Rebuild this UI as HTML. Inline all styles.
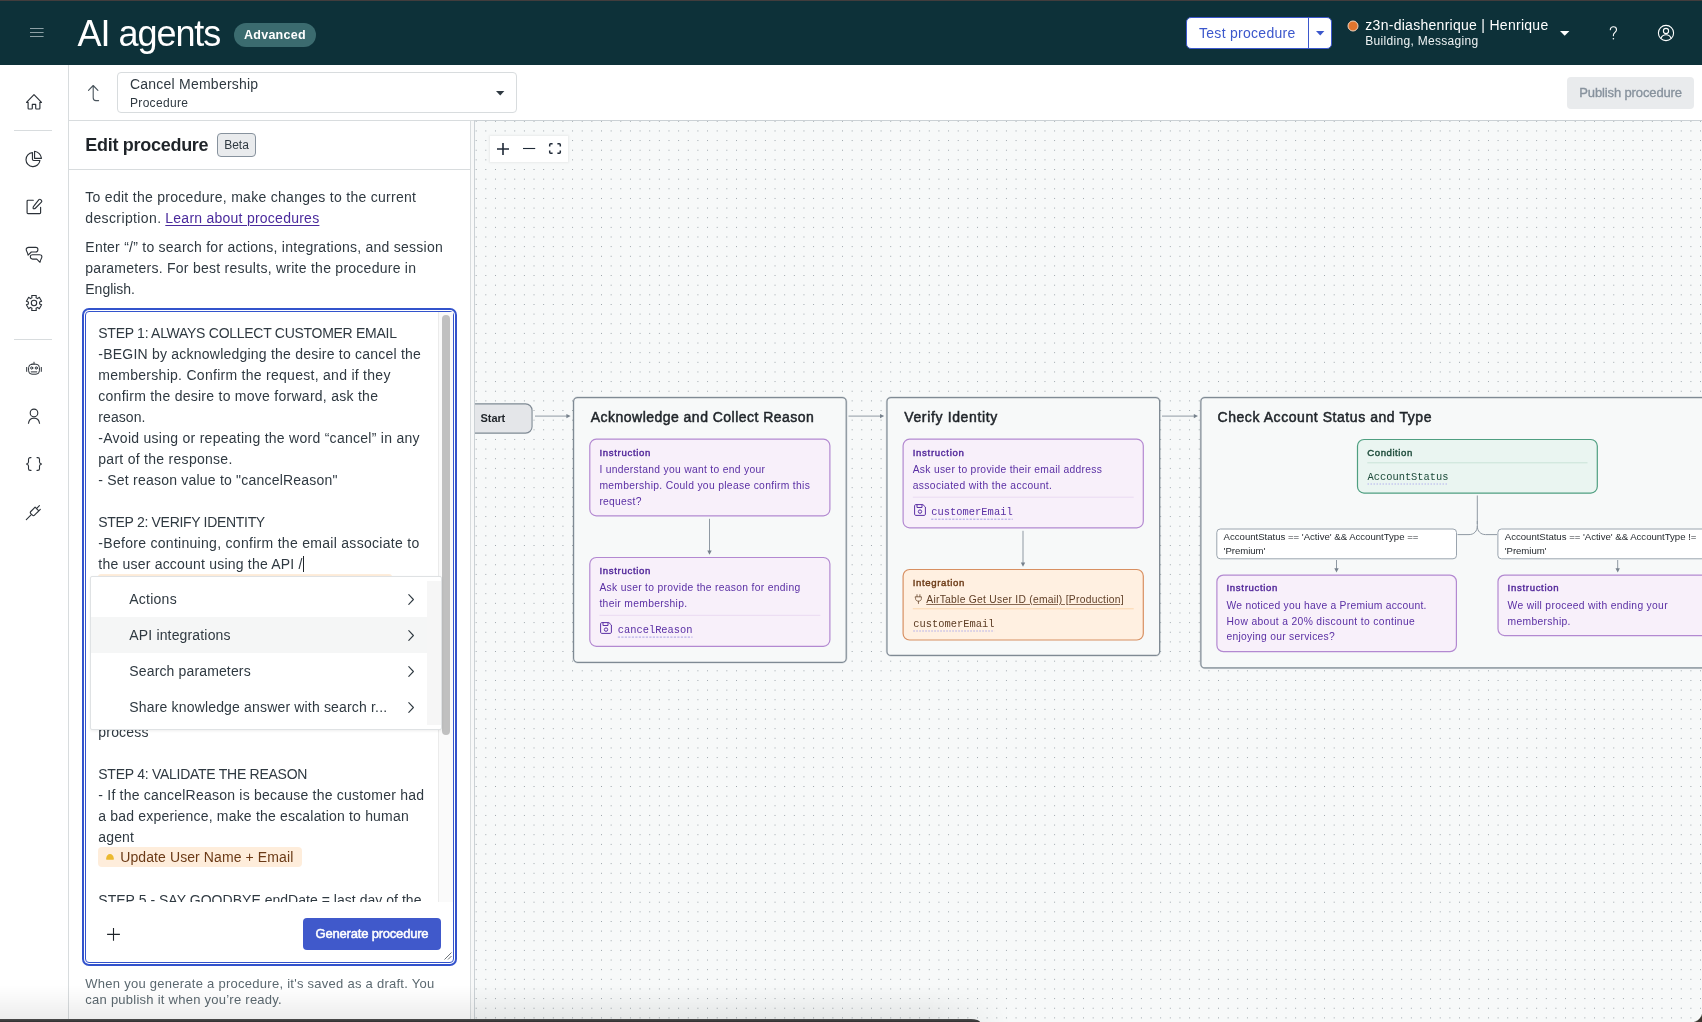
<!DOCTYPE html>
<html><head><meta charset="utf-8"><title>AI agents</title>
<style>
*{box-sizing:border-box;margin:0;padding:0}
html{will-change:transform}
html,body{width:1702px;height:1022px;overflow:hidden;background:#fff;font-family:"Liberation Sans",sans-serif;color:#2f3941}
.abs{position:absolute}
.t{position:absolute;white-space:pre;line-height:1}
svg{position:absolute;overflow:visible}
#hdr{position:absolute;left:0;top:0;width:1702px;height:65px;background:#0d3139}
#side{position:absolute;left:0;top:65px;width:69px;height:957px;background:#fff;border-right:1px solid #d8dcde}
#sub{position:absolute;left:69px;top:65px;width:1633px;height:56px;background:#fff;border-bottom:1px solid #d8dcde}
#panel{position:absolute;left:69px;top:121px;width:402px;height:901px;background:#fff;border-right:1px solid #d8dcde}
#gap{position:absolute;left:471px;top:121px;width:3px;height:901px;background:#f8f9f9}
#canvas{position:absolute;left:474px;top:120px;width:1228px;height:902px;border-left:1px solid #cbd1d5;border-top:1px solid #cbd1d5;background-color:#f7f9f9;background-image:radial-gradient(circle at 0.5px 0.5px,#9aa3a9 0.55px,rgba(154,163,169,0) 0.95px);background-size:9.647px 9.653px;background-position:.7px -.2px}
#clip{position:absolute;left:475px;top:121px;width:1227px;height:901px;overflow:hidden}
#clip>.in{position:absolute;left:-475px;top:-121px;width:1702px;height:1022px}
</style></head><body>
<div id="hdr"></div>
<div id="side"></div>
<div id="sub"></div>
<div id="panel"></div>
<div id="gap"></div>
<div id="canvas"></div>
<div class="abs" style="left:0px;top:0px;width:1702px;height:1px;background:#423d3d"></div><svg style="left:30px;top:28px;" width="14" height="10" viewBox="0 0 14 10" fill="none"><path d="M0 .5h13.6M0 4.5h13.6M0 8.5h13.6" stroke="#8da0a5" stroke-width="1"/></svg><span class="t" style="left:77.50px;top:16.09px;font-size:36px;font-family:'Liberation Sans',sans-serif;color:#ffffff;letter-spacing:-1.034px;">AI agents</span><div class="abs" style="left:234px;top:23px;width:82px;height:24px;background:#3b6b6f;border-radius:12px"></div><span class="t" style="left:244.00px;top:28.77px;font-size:12.5px;font-family:'Liberation Sans',sans-serif;font-weight:700;color:#ffffff;letter-spacing:0.256px;">Advanced</span><div class="abs" style="left:1186px;top:17px;width:146px;height:32px;background:#fff;border:1px solid #3b57cc;border-radius:5px"></div><div class="abs" style="left:1308px;top:17px;width:1px;height:32px;background:#3b57cc"></div><span class="t" style="left:1199.00px;top:25.91px;font-size:14px;font-family:'Liberation Sans',sans-serif;color:#3b57cc;letter-spacing:0.285px;">Test procedure</span><svg style="left:1315.5px;top:30.5px;" width="9" height="5" viewBox="0 0 9 5" fill="none"><path d="M0 0h8.4L4.2 4.4z" fill="#3b57cc"/></svg><svg style="left:1347px;top:20px;" width="12" height="12" viewBox="0 0 12 12" fill="none"><circle cx="6" cy="6" r="5" fill="#e1752e" stroke="#f4d4bd" stroke-width="1"/></svg><span class="t" style="left:1365.30px;top:18.11px;font-size:14px;font-family:'Liberation Sans',sans-serif;color:#ffffff;letter-spacing:0.280px;">z3n-diashenrique | Henrique</span><span class="t" style="left:1365.30px;top:35.00px;font-size:12px;font-family:'Liberation Sans',sans-serif;color:#eef3f4;letter-spacing:0.305px;">Building, Messaging</span><svg style="left:1560px;top:30.5px;" width="10" height="5" viewBox="0 0 10 5" fill="none"><path d="M0 0h9.4L4.7 4.8z" fill="#fff"/></svg><svg style="left:1609px;top:26px;" width="9" height="14" viewBox="0 0 9 14" fill="none"><path d="M1.300 3.700C1.300 1.900 2.600 .8 4.400 .8S7.500 2 7.500 3.700C7.500 6.200 4.400 6.400 4.400 9.100V9.800" stroke="#fff" stroke-width="1.100" stroke-linecap="round"/><circle cx="4.400" cy="12.700" r=".8" fill="#fff"/></svg><svg style="left:1657px;top:24px;" width="18" height="18" viewBox="0 0 18 18" fill="none"><circle cx="9" cy="9" r="7.6" stroke="#fff" stroke-width="1.1"/><circle cx="9" cy="7" r="2.6" stroke="#fff" stroke-width="1.1"/><path d="M4 14.2c.9-2.4 2.8-3.4 5-3.4s4.1 1 5 3.4" stroke="#fff" stroke-width="1.1"/></svg>
<svg style="left:26px;top:94px;" width="16" height="16" viewBox="0 0 16 16" fill="none"><g stroke="#2b3138" stroke-width="1.15" stroke-linecap="round" stroke-linejoin="round"><path d="M.5 8.300 8 .7l7.500 7.600h-1.600v6c0 .4-.3.700-.7.700H10.400c-.4 0-.7-.3-.7-.7v-3.900H6.300v3.900c0 .4-.3.700-.7.700H2.800c-.4 0-.7-.3-.7-.7v-6z"/></g></svg><div class="abs" style="left:14px;top:130px;width:38px;height:1px;background:#d8dcde"></div><svg style="left:26px;top:151px;" width="16" height="16" viewBox="0 0 16 16" fill="none"><g stroke="#2b3138" stroke-width="1.15" stroke-linecap="round" stroke-linejoin="round"><path d="M6.450 1.620A7 7 0 1 0 13.940 9.500H7.650Q6.450 9.500 6.450 8.300z"/><path d="M8.560 .3A8.600 8.600 0 0 1 15.500 7.300H8.560z"/></g></svg><svg style="left:26px;top:199px;" width="16" height="16" viewBox="0 0 16 16" fill="none"><g stroke="#2b3138" stroke-width="1.15" stroke-linecap="round" stroke-linejoin="round"><path d="M14.600 8.200v5.500c0 .5-.4.900-.9.900H2c-.5 0-.9-.4-.9-.9V2.100c0-.5.400-.9.900-.9h5.300"/><path d="M12.900.7c.5-.5 1.300-.5 1.800 0l.7.700c.5.5.5 1.300 0 1.800L9.600 9c-.5.500-1.700.800-2.400.6-.2-.7.100-1.900.600-2.400z"/></g></svg><svg style="left:26px;top:247px;" width="16" height="16" viewBox="0 0 16 16" fill="none"><g stroke="#2b3138" stroke-width="1.1" stroke-linecap="round" stroke-linejoin="round"><path d="M2.600.4h7.200c1.200 0 2.100.9 2.100 2 0 1.400-.9 2.600-2.300 2.600H5.300L2.100 8.200c-.2-1-.500-2-.9-2.900C.700 4.300.2 3.300.2 2.400.2 1.300 1.300.4 2.600.4z"/><path d="M6.600 7.700h7c1.300 0 2.300.9 2.300 2 0 .9-.5 1.800-1 2.700-.4.900-.7 1.900-.9 2.900l-3.200-3.200H6.600c-1.400 0-2.300-1.200-2.300-2.500 0-1 .9-1.900 2.300-1.900z"/></g></svg><svg style="left:26px;top:295px;" width="16" height="16" viewBox="0 0 16 16" fill="none"><g stroke="#2b3138" stroke-width="1.1" stroke-linecap="round" stroke-linejoin="round"><circle cx="8" cy="8" r="2.700"/><path d="M5.72 0.54L10.28 0.54L10.04 2.68L11.59 3.57L13.32 2.30L15.60 6.25L13.63 7.11L13.63 8.89L15.60 9.75L13.32 13.70L11.59 12.43L10.04 13.32L10.28 15.46L5.72 15.46L5.96 13.32L4.41 12.43L2.68 13.70L0.40 9.75L2.37 8.89L2.37 7.11L0.40 6.25L2.68 2.30L4.41 3.57L5.96 2.68z"/></g></svg><div class="abs" style="left:14px;top:339px;width:38px;height:1px;background:#d8dcde"></div><svg style="left:26px;top:361px;" width="16" height="16" viewBox="0 0 16 16" fill="none"><g stroke="#2b3138" stroke-width="1" stroke-linecap="round" stroke-linejoin="round"><rect x="2.600" y="3.200" width="10.800" height="10" rx="3.400"/><path d="M8 3V1.200M.7 6.400v4M15.300 6.400v4M5.200 10.900h5.600"/><circle cx="5.700" cy="7" r="1.100"/><circle cx="10.300" cy="7" r="1.100"/></g></svg><svg style="left:26px;top:408px;" width="16" height="16" viewBox="0 0 16 16" fill="none"><g stroke="#2b3138" stroke-width="1.1" stroke-linecap="round" stroke-linejoin="round"><circle cx="8" cy="4.900" r="3.800"/><path d="M2.400 15.800c.4-3.600 2.700-5.700 5.600-5.700s5.200 2.100 5.600 5.700" stroke-linecap="butt"/></g></svg><svg style="left:26px;top:456px;" width="16" height="16" viewBox="0 0 16 16" fill="none"><g stroke="#2b3138" stroke-width="1.1" stroke-linecap="round" stroke-linejoin="round"><path d="M5 1.600H4.200c-.9 0-1.700.7-1.700 1.700v2.600c0 .9-.8 1.700-2 2.100 1.200.4 2 1.200 2 2.100v2.600c0 1 .8 1.700 1.700 1.700H5M11 1.600h.8c.9 0 1.700.7 1.700 1.700v2.600c0 .9.800 1.700 2 2.100-1.200.4-2 1.200-2 2.100v2.600c0 1-.8 1.700-1.700 1.700H11"/></g></svg><svg style="left:26px;top:504px;" width="16" height="16" viewBox="0 0 16 16" fill="none"><g stroke="#2b3138" stroke-width="1.1" stroke-linecap="round" stroke-linejoin="round"><path d="M.3 15.600l4.500-4.500M9.100 3.200L4.800 7.500c-.6.600-.6 1.500 0 2.100l1.600 1.600c.6.600 1.500.6 2.100 0l4.300-4.300zM10.500 4.600l2.900-2.900M11.400 8.300l2.900-2.900M14.800.5"/></g></svg>
<svg style="left:87px;top:84px;" width="13" height="18" viewBox="0 0 13 18" fill="none"><path d="M6.200 1.600v12.200c0 1.600 1.100 2.800 2.700 2.800h2.700M1.500 6.300l4.700-4.800 4.700 4.800" stroke="#49545c" stroke-width="1.100" stroke-linecap="round" stroke-linejoin="round"/></svg><div class="abs" style="left:117px;top:72px;width:400px;height:41px;background:#fff;border:1px solid #d8dcde;border-radius:4px"></div><span class="t" style="left:130.00px;top:76.81px;font-size:14px;font-family:'Liberation Sans',sans-serif;color:#2f3941;letter-spacing:0.229px;">Cancel Membership</span><span class="t" style="left:130.00px;top:97.20px;font-size:12px;font-family:'Liberation Sans',sans-serif;color:#2f3941;letter-spacing:0.314px;">Procedure</span><svg style="left:495.5px;top:90.5px;" width="9" height="5" viewBox="0 0 9 5" fill="none"><path d="M0 0h8.400L4.200 4.400z" fill="#2f3941"/></svg><div class="abs" style="left:1567px;top:77px;width:127px;height:32px;background:#e9ebed;border-radius:4px"></div><span class="t" style="left:1579.30px;top:86.35px;font-size:13px;font-family:'Liberation Sans',sans-serif;color:#87929d;-webkit-text-stroke:.35px #87929d;letter-spacing:-0.129px;">Publish procedure</span>
<span class="t" style="left:85.30px;top:136.34px;font-size:18px;font-family:'Liberation Sans',sans-serif;font-weight:700;color:#1f2429;letter-spacing:-0.288px;">Edit procedure</span><div class="abs" style="left:217px;top:133px;width:39px;height:24px;background:#e9ebed;border:1px solid #87929d;border-radius:4px"></div><span class="t" style="left:224.20px;top:139.20px;font-size:12px;font-family:'Liberation Sans',sans-serif;color:#2f3941;letter-spacing:0.003px;">Beta</span><div class="abs" style="left:69px;top:169px;width:401px;height:1px;background:#d8dcde"></div><span class="t" style="left:85.30px;top:190.01px;font-size:14px;font-family:'Liberation Sans',sans-serif;color:#2f3941;letter-spacing:0.285px;">To edit the procedure, make changes to the current</span><span class="t" style="left:85.30px;top:211.21px;font-size:14px;font-family:'Liberation Sans',sans-serif;color:#2f3941;letter-spacing:0.376px;">description.</span><span class="t" style="left:165.30px;top:211.21px;font-size:14px;font-family:'Liberation Sans',sans-serif;color:#4a2a9c;text-decoration:underline;text-underline-offset:2px;text-decoration-thickness:1px;letter-spacing:0.247px;">Learn about procedures</span><span class="t" style="left:85.30px;top:240.11px;font-size:14px;font-family:'Liberation Sans',sans-serif;color:#2f3941;letter-spacing:0.250px;">Enter “/” to search for actions, integrations, and session</span><span class="t" style="left:85.30px;top:261.21px;font-size:14px;font-family:'Liberation Sans',sans-serif;color:#2f3941;letter-spacing:0.260px;">parameters. For best results, write the procedure in</span><span class="t" style="left:85.30px;top:282.01px;font-size:14px;font-family:'Liberation Sans',sans-serif;color:#2f3941;letter-spacing:-0.014px;">English.</span><div class="abs" style="left:85px;top:311px;width:369px;height:652px;background:#fff;border:1px solid #3353cc;border-radius:4px;box-shadow:0 0 0 1px #fff,0 0 0 3px #3353cc"></div><div class="abs" style="left:438px;top:312px;width:15px;height:590px;background:#fafafa;border-left:1px solid #ebebeb"></div><div class="abs" style="left:442px;top:315px;width:8px;height:420px;background:#c0c0c0;border-radius:4px"></div><div class="abs" style="left:86px;top:312px;width:352px;height:590px;overflow:hidden"><div class="abs" style="left:-86px;top:-312px;width:1702px;height:1022px"><span class="t" style="left:98.30px;top:326.01px;font-size:14px;font-family:'Liberation Sans',sans-serif;color:#2f3941;letter-spacing:-0.276px;">STEP 1: ALWAYS COLLECT CUSTOMER EMAIL</span><span class="t" style="left:98.30px;top:347.01px;font-size:14px;font-family:'Liberation Sans',sans-serif;color:#2f3941;letter-spacing:0.224px;">-BEGIN by acknowledging the desire to cancel the</span><span class="t" style="left:98.30px;top:368.01px;font-size:14px;font-family:'Liberation Sans',sans-serif;color:#2f3941;letter-spacing:0.279px;">membership. Confirm the request, and if they</span><span class="t" style="left:98.30px;top:389.01px;font-size:14px;font-family:'Liberation Sans',sans-serif;color:#2f3941;letter-spacing:0.266px;">confirm the desire to move forward, ask the</span><span class="t" style="left:98.30px;top:410.01px;font-size:14px;font-family:'Liberation Sans',sans-serif;color:#2f3941;letter-spacing:0.085px;">reason.</span><span class="t" style="left:98.30px;top:431.01px;font-size:14px;font-family:'Liberation Sans',sans-serif;color:#2f3941;letter-spacing:0.272px;">-Avoid using or repeating the word “cancel” in any</span><span class="t" style="left:98.30px;top:452.01px;font-size:14px;font-family:'Liberation Sans',sans-serif;color:#2f3941;letter-spacing:0.280px;">part of the response.</span><span class="t" style="left:98.30px;top:473.01px;font-size:14px;font-family:'Liberation Sans',sans-serif;color:#2f3941;letter-spacing:0.215px;">- Set reason value to &quot;cancelReason&quot;</span><span class="t" style="left:98.30px;top:515.01px;font-size:14px;font-family:'Liberation Sans',sans-serif;color:#2f3941;letter-spacing:-0.311px;">STEP 2: VERIFY IDENTITY</span><span class="t" style="left:98.30px;top:536.01px;font-size:14px;font-family:'Liberation Sans',sans-serif;color:#2f3941;letter-spacing:0.292px;">-Before continuing, confirm the email associate to</span><span class="t" style="left:98.30px;top:557.01px;font-size:14px;font-family:'Liberation Sans',sans-serif;color:#2f3941;letter-spacing:0.207px;">the user account using the API /</span><span class="t" style="left:98.30px;top:725.01px;font-size:14px;font-family:'Liberation Sans',sans-serif;color:#2f3941;letter-spacing:0.196px;">process</span><span class="t" style="left:98.30px;top:767.01px;font-size:14px;font-family:'Liberation Sans',sans-serif;color:#2f3941;letter-spacing:-0.268px;">STEP 4: VALIDATE THE REASON</span><span class="t" style="left:98.30px;top:788.01px;font-size:14px;font-family:'Liberation Sans',sans-serif;color:#2f3941;letter-spacing:0.219px;">- If the cancelReason is because the customer had</span><span class="t" style="left:98.30px;top:809.01px;font-size:14px;font-family:'Liberation Sans',sans-serif;color:#2f3941;letter-spacing:0.187px;">a bad experience, make the escalation to human</span><span class="t" style="left:98.30px;top:830.01px;font-size:14px;font-family:'Liberation Sans',sans-serif;color:#2f3941;letter-spacing:0.131px;">agent</span><span class="t" style="left:98.30px;top:893.01px;font-size:14px;font-family:'Liberation Sans',sans-serif;color:#2f3941;letter-spacing:0.031px;">STEP 5 - SAY GOODBYE endDate = last day of the</span><div class="abs" style="left:303px;top:556px;width:1px;height:16px;background:#1f2429"></div><div class="abs" style="left:98px;top:574px;width:294px;height:6px;background:#feeddb;border-radius:3px 3px 0 0"></div><div class="abs" style="left:98px;top:847px;width:204px;height:20px;background:#feeddb;border-radius:4px"></div><svg style="left:106px;top:853px;" width="8" height="8" viewBox="0 0 8 8" fill="none"><path d="M.6 6.700C.1 6.700.1 6 .2 5.300.5 2.700 2 .9 4 .9s3.500 1.800 3.800 4.400c.1.700.1 1.400-.4 1.400z" fill="#ebb92e"/></svg><span class="t" style="left:120.20px;top:850.01px;font-size:14px;font-family:'Liberation Sans',sans-serif;color:#6b3a16;letter-spacing:0.100px;">Update User Name + Email</span></div></div><div class="abs" style="left:89.5px;top:576px;width:352.5px;height:153.5px;background:#fff;border:1px solid #dfe2e4;border-radius:2px;box-shadow:0 1px 3px rgba(0,0,0,.07)"></div><div class="abs" style="left:91px;top:617px;width:336px;height:36px;background:#f5f6f6"></div><div class="abs" style="left:427px;top:581px;width:14px;height:144px;background:#f6f6f6"></div><span class="t" style="left:129.30px;top:592.01px;font-size:14px;font-family:'Liberation Sans',sans-serif;color:#2f3941;letter-spacing:0.240px;">Actions</span><svg style="left:408px;top:593.5px;" width="6" height="11" viewBox="0 0 6 11" fill="none"><path d="M.8 .6l4.600 4.900L.8 10.400" stroke="#2f3941" stroke-width="1.100" stroke-linecap="round" stroke-linejoin="round"/></svg><span class="t" style="left:129.30px;top:628.01px;font-size:14px;font-family:'Liberation Sans',sans-serif;color:#2f3941;letter-spacing:0.160px;">API integrations</span><svg style="left:408px;top:629.5px;" width="6" height="11" viewBox="0 0 6 11" fill="none"><path d="M.8 .6l4.600 4.900L.8 10.400" stroke="#2f3941" stroke-width="1.100" stroke-linecap="round" stroke-linejoin="round"/></svg><span class="t" style="left:129.30px;top:664.01px;font-size:14px;font-family:'Liberation Sans',sans-serif;color:#2f3941;letter-spacing:0.143px;">Search parameters</span><svg style="left:408px;top:665.5px;" width="6" height="11" viewBox="0 0 6 11" fill="none"><path d="M.8 .6l4.600 4.900L.8 10.400" stroke="#2f3941" stroke-width="1.100" stroke-linecap="round" stroke-linejoin="round"/></svg><span class="t" style="left:129.30px;top:700.01px;font-size:14px;font-family:'Liberation Sans',sans-serif;color:#2f3941;letter-spacing:0.170px;">Share knowledge answer with search r...</span><svg style="left:408px;top:701.5px;" width="6" height="11" viewBox="0 0 6 11" fill="none"><path d="M.8 .6l4.600 4.900L.8 10.400" stroke="#2f3941" stroke-width="1.100" stroke-linecap="round" stroke-linejoin="round"/></svg><svg style="left:107px;top:928px;" width="13" height="13" viewBox="0 0 13 13" fill="none"><path d="M6.500 0v12.800M.1 6.400h12.800" stroke="#1f2429" stroke-width="1.100"/></svg><div class="abs" style="left:303px;top:918px;width:138px;height:32px;background:#4059cb;border-radius:4px"></div><span class="t" style="left:315.60px;top:927.35px;font-size:13px;font-family:'Liberation Sans',sans-serif;color:#fff;-webkit-text-stroke:.5px #fff;letter-spacing:-0.198px;">Generate procedure</span><svg style="left:444px;top:952px;" width="8" height="8" viewBox="0 0 8 8" fill="none"><path d="M7.500 .5l-7 7M7.500 4l-3.500 3.500" stroke="#6b7278" stroke-width="1"/></svg><span class="t" style="left:85.30px;top:976.95px;font-size:13px;font-family:'Liberation Sans',sans-serif;color:#5c6970;letter-spacing:0.263px;">When you generate a procedure, it&#x27;s saved as a draft. You</span><span class="t" style="left:85.30px;top:992.95px;font-size:13px;font-family:'Liberation Sans',sans-serif;color:#5c6970;letter-spacing:0.252px;">can publish it when you’re ready.</span>
<div id="clip"><div class="in">
<svg style="left:0;top:0" width="1702" height="1022" viewBox="0 0 1702 1022" fill="none"><rect x="440.55" y="403.85" width="91.50" height="29.30" rx="6.5" fill="#e4e6e9" stroke="#7f8a94" stroke-width="1.1"/><path d="M535 416.1H568.6" stroke="#8f99a3" stroke-width="1"/><path d="M566.4 413.90000000000003v4.400L570.6 416.1z" fill="#77828d"/><rect x="572.90" y="396.90" width="274.00" height="266.10" rx="4.5" fill="none" stroke="rgba(127,138,148,.28)" stroke-width="1"/><rect x="573.60" y="397.60" width="272.60" height="264.70" rx="4" fill="#f7f9f9" stroke="#7f8a94" stroke-width="1.2"/><rect x="589.80" y="439.20" width="240.10" height="76.60" rx="6.5" fill="#f8f0fa" stroke="#b389d1" stroke-width="1.2"/><path d="M709.5 518.8V552.8" stroke="#8f99a3" stroke-width="1"/><path d="M707.3 550.5999999999999h4.400L709.5 554.8z" fill="#77828d"/><rect x="589.80" y="557.50" width="240.10" height="88.80" rx="6.5" fill="#f8f0fa" stroke="#b389d1" stroke-width="1.2"/><path d="M599.4 615.3H820.3" stroke="#eadaf2" stroke-width="1"/><path d="M617.8 637.1H692.5" stroke="#a9a0e4" stroke-width="1" stroke-dasharray="2.200 1.300"/><path d="M848.5 416.1H882.2" stroke="#8f99a3" stroke-width="1"/><path d="M880.0 413.90000000000003v4.400L884.2 416.1z" fill="#77828d"/><rect x="886.30" y="396.90" width="274.00" height="259.20" rx="4.5" fill="none" stroke="rgba(127,138,148,.28)" stroke-width="1"/><rect x="887.00" y="397.60" width="272.60" height="257.80" rx="4" fill="#f7f9f9" stroke="#7f8a94" stroke-width="1.2"/><rect x="903.10" y="439.20" width="240.20" height="88.60" rx="6.5" fill="#f8f0fa" stroke="#b389d1" stroke-width="1.2"/><path d="M912.8 497.2H1133.7" stroke="#eadaf2" stroke-width="1"/><path d="M931.2 519.2H1012.7" stroke="#a9a0e4" stroke-width="1" stroke-dasharray="2.200 1.300"/><path d="M1023 530.8V564.8" stroke="#8f99a3" stroke-width="1"/><path d="M1020.8 562.5999999999999h4.400L1023 566.8z" fill="#77828d"/><rect x="903.10" y="569.50" width="240.20" height="70.50" rx="6.5" fill="#fff0e1" stroke="#d89062" stroke-width="1.2"/><path d="M912.8 608.8H1133.7" stroke="#fbd6ad" stroke-width="1"/><path d="M913.3 631.0H994.4" stroke="#a9a7ea" stroke-width="1" stroke-dasharray="1.500 1.500"/><path d="M1162 416.1H1196" stroke="#8f99a3" stroke-width="1"/><path d="M1193.8 413.90000000000003v4.400L1198 416.1z" fill="#77828d"/><rect x="1200.20" y="396.90" width="559.90" height="271.70" rx="4.5" fill="none" stroke="rgba(127,138,148,.28)" stroke-width="1"/><rect x="1200.90" y="397.60" width="558.50" height="270.30" rx="4" fill="#f7f9f9" stroke="#7f8a94" stroke-width="1.2"/><rect x="1357.50" y="439.50" width="239.80" height="53.60" rx="6.5" fill="#eaf5f1" stroke="#4f9f81" stroke-width="1.2"/><path d="M1367.3 462.8H1587.5" stroke="#c9e3d8" stroke-width="1"/><path d="M1367.5 484.0H1448.5" stroke="#b4b2ee" stroke-width="1" stroke-dasharray="1.500 1.500"/><path d="M1477.300 495.500V524" stroke="#8f99a3" stroke-width="1" fill="none"/><path d="M1457.500 534.600H1469c5 0 8.300-3.500 8.300-8.500V521M1497 534.600H1485.600c-5 0-8.300-3.500-8.300-8.500" stroke="#8f99a3" stroke-width="1" fill="none"/><rect x="1216.80" y="529.00" width="239.70" height="29.80" rx="3.5" fill="#fff" stroke="#9aa4ae" stroke-width="1"/><rect x="1497.90" y="529.00" width="261.60" height="29.80" rx="3.5" fill="#fff" stroke="#9aa4ae" stroke-width="1"/><path d="M1336.5 560V570.5" stroke="#8f99a3" stroke-width="1"/><path d="M1334.3 568.3h4.400L1336.5 572.5z" fill="#77828d"/><path d="M1617.7 560V570.5" stroke="#8f99a3" stroke-width="1"/><path d="M1615.5 568.3h4.400L1617.7 572.5z" fill="#77828d"/><rect x="1216.90" y="575.10" width="239.50" height="76.60" rx="6.5" fill="#f8f0fa" stroke="#b389d1" stroke-width="1.2"/><rect x="1498.00" y="575.10" width="261.40" height="60.50" rx="6.5" fill="#f8f0fa" stroke="#b389d1" stroke-width="1.2"/></svg><div class="abs" style="left:490px;top:136px;width:78px;height:26px;background:#fff;box-shadow:0 0 2px 1px rgba(0,0,0,.06)"></div><svg style="left:497px;top:143px;" width="12" height="12" viewBox="0 0 12 12" fill="none"><path d="M6 0v12M0 6h12" stroke="#1f2937" stroke-width="1.600"/></svg><svg style="left:523px;top:147px;" width="12" height="3" viewBox="0 0 12 3" fill="none"><path d="M0 1.500h12.200" stroke="#1f2937" stroke-width="1.100"/></svg><svg style="left:549px;top:143px;" width="12" height="11" viewBox="0 0 12 11" fill="none"><path d="M.7 3.400V1.700c0-.6.400-1 1-1h1.900M8.400.7h1.900c.6 0 1 .4 1 1v1.700M11.300 7.600v1.700c0 .6-.4 1-1 1H8.400M3.600 10.300H1.700c-.6 0-1-.4-1-1V7.600" stroke="#1f2937" stroke-width="1.500"/></svg><span class="t" style="left:480.60px;top:413.24px;font-size:11px;font-family:'Liberation Sans',sans-serif;font-weight:700;color:#1f2429;letter-spacing:-0.093px;">Start</span><span class="t" style="left:590.80px;top:410.21px;font-size:14px;font-family:'Liberation Sans',sans-serif;color:#1f2429;-webkit-text-stroke:.5px #1f2429;letter-spacing:0.471px;">Acknowledge and Collect Reason</span><span class="t" style="left:599.40px;top:448.14px;font-size:9.6px;font-family:'Liberation Sans',sans-serif;color:#52279a;-webkit-text-stroke:.4px #52279a;letter-spacing:0.676px;">Instruction</span><span class="t" style="left:599.40px;top:465.09px;font-size:10.3px;font-family:'Liberation Sans',sans-serif;color:#5a2fa4;letter-spacing:0.309px;">I understand you want to end your</span><span class="t" style="left:599.40px;top:481.09px;font-size:10.3px;font-family:'Liberation Sans',sans-serif;color:#5a2fa4;letter-spacing:0.326px;">membership. Could you please confirm this</span><span class="t" style="left:599.40px;top:496.99px;font-size:10.3px;font-family:'Liberation Sans',sans-serif;color:#5a2fa4;letter-spacing:0.278px;">request?</span><span class="t" style="left:599.40px;top:566.24px;font-size:9.6px;font-family:'Liberation Sans',sans-serif;color:#52279a;-webkit-text-stroke:.4px #52279a;letter-spacing:0.676px;">Instruction</span><span class="t" style="left:599.40px;top:583.09px;font-size:10.3px;font-family:'Liberation Sans',sans-serif;color:#5a2fa4;letter-spacing:0.312px;">Ask user to provide the reason for ending</span><span class="t" style="left:599.40px;top:599.19px;font-size:10.3px;font-family:'Liberation Sans',sans-serif;color:#5a2fa4;letter-spacing:0.335px;">their membership.</span><svg style="left:600px;top:622.2px;" width="12" height="12" viewBox="0 0 12 12" fill="none"><g stroke="#5a2fa4" stroke-width="1" stroke-linejoin="round"><path d="M1.700.6h7.200l2.500 2.400v7.300c0 .6-.5 1.100-1.100 1.100H1.700c-.6 0-1.100-.5-1.100-1.100V1.700C.6 1.100 1.100.6 1.700.6z"/><path d="M3 .8v2.700h5V.8"/><circle cx="6" cy="7.600" r="1.700"/></g></svg><span class="t" style="left:617.80px;top:625.32px;font-size:10.4px;font-family:'Liberation Mono',monospace;color:#5a2fa4;letter-spacing:-0.011px;">cancelReason</span><span class="t" style="left:904.20px;top:410.21px;font-size:14px;font-family:'Liberation Sans',sans-serif;color:#1f2429;-webkit-text-stroke:.5px #1f2429;letter-spacing:0.650px;">Verify Identity</span><span class="t" style="left:912.70px;top:448.14px;font-size:9.6px;font-family:'Liberation Sans',sans-serif;color:#52279a;-webkit-text-stroke:.4px #52279a;letter-spacing:0.694px;">Instruction</span><span class="t" style="left:912.70px;top:465.09px;font-size:10.3px;font-family:'Liberation Sans',sans-serif;color:#5a2fa4;letter-spacing:0.297px;">Ask user to provide their email address</span><span class="t" style="left:912.70px;top:481.09px;font-size:10.3px;font-family:'Liberation Sans',sans-serif;color:#5a2fa4;letter-spacing:0.362px;">associated with the account.</span><svg style="left:913.5px;top:504.2px;" width="12" height="12" viewBox="0 0 12 12" fill="none"><g stroke="#5a2fa4" stroke-width="1" stroke-linejoin="round"><path d="M1.700.6h7.200l2.500 2.400v7.300c0 .6-.5 1.100-1.100 1.100H1.700c-.6 0-1.100-.5-1.100-1.100V1.700C.6 1.100 1.100.6 1.700.6z"/><path d="M3 .8v2.700h5V.8"/><circle cx="6" cy="7.600" r="1.700"/></g></svg><span class="t" style="left:931.20px;top:507.42px;font-size:10.4px;font-family:'Liberation Mono',monospace;color:#5a2fa4;letter-spacing:0.034px;">customerEmail</span><span class="t" style="left:912.80px;top:578.24px;font-size:9.6px;font-family:'Liberation Sans',sans-serif;color:#6b3a16;-webkit-text-stroke:.4px #6b3a16;letter-spacing:0.614px;">Integration</span><svg style="left:913.5px;top:594px;" width="9" height="11" viewBox="0 0 9 11" fill="none"><g stroke="#6b4a30" stroke-width=".8" stroke-linecap="round"><path d="M3 .7v2M5.900 .7v2M1.500 2.800h5.900v1.800c0 1.500-1.200 2.600-2.950 2.600S1.500 6.100 1.500 4.600zM4.450 7.200v2.300"/></g></svg><span class="t" style="left:926.30px;top:595.19px;font-size:10.3px;font-family:'Liberation Sans',sans-serif;color:#5f3e26;text-decoration:underline;text-underline-offset:1px;text-decoration-thickness:.8px;text-decoration-color:#8a6a52;letter-spacing:0.269px;">AirTable Get User ID (email) [Production]</span><span class="t" style="left:913.30px;top:619.22px;font-size:10.4px;font-family:'Liberation Mono',monospace;color:#5c3b22;letter-spacing:0.003px;">customerEmail</span><span class="t" style="left:1217.50px;top:410.21px;font-size:14px;font-family:'Liberation Sans',sans-serif;color:#1f2429;-webkit-text-stroke:.5px #1f2429;letter-spacing:0.562px;">Check Account Status and Type</span><span class="t" style="left:1367.30px;top:448.24px;font-size:9.6px;font-family:'Liberation Sans',sans-serif;color:#1c4a39;-webkit-text-stroke:.4px #1c4a39;letter-spacing:0.550px;">Condition</span><span class="t" style="left:1367.50px;top:472.22px;font-size:10.4px;font-family:'Liberation Mono',monospace;color:#1c4a39;letter-spacing:-0.005px;">AccountStatus</span><span class="t" style="left:1223.60px;top:532.44px;font-size:9.6px;font-family:'Liberation Sans',sans-serif;color:#1f2429;letter-spacing:-0.008px;">AccountStatus == &#x27;Active&#x27; &amp;&amp; AccountType ==</span><span class="t" style="left:1223.60px;top:546.34px;font-size:9.6px;font-family:'Liberation Sans',sans-serif;color:#1f2429;letter-spacing:-0.027px;">&#x27;Premium&#x27;</span><span class="t" style="left:1504.80px;top:532.44px;font-size:9.6px;font-family:'Liberation Sans',sans-serif;color:#1f2429;letter-spacing:-0.014px;">AccountStatus == &#x27;Active&#x27; &amp;&amp; AccountType !=</span><span class="t" style="left:1504.80px;top:546.34px;font-size:9.6px;font-family:'Liberation Sans',sans-serif;color:#1f2429;letter-spacing:-0.050px;">&#x27;Premium&#x27;</span><span class="t" style="left:1226.50px;top:583.24px;font-size:9.6px;font-family:'Liberation Sans',sans-serif;color:#52279a;-webkit-text-stroke:.4px #52279a;letter-spacing:0.667px;">Instruction</span><span class="t" style="left:1226.50px;top:600.99px;font-size:10.3px;font-family:'Liberation Sans',sans-serif;color:#5a2fa4;letter-spacing:0.258px;">We noticed you have a Premium account.</span><span class="t" style="left:1226.50px;top:617.19px;font-size:10.3px;font-family:'Liberation Sans',sans-serif;color:#5a2fa4;letter-spacing:0.357px;">How about a 20% discount to continue</span><span class="t" style="left:1226.50px;top:632.19px;font-size:10.3px;font-family:'Liberation Sans',sans-serif;color:#5a2fa4;letter-spacing:0.275px;">enjoying our services?</span><span class="t" style="left:1507.60px;top:583.24px;font-size:9.6px;font-family:'Liberation Sans',sans-serif;color:#52279a;-webkit-text-stroke:.4px #52279a;letter-spacing:0.676px;">Instruction</span><span class="t" style="left:1507.60px;top:600.99px;font-size:10.3px;font-family:'Liberation Sans',sans-serif;color:#5a2fa4;letter-spacing:0.311px;">We will proceed with ending your</span><span class="t" style="left:1507.60px;top:617.19px;font-size:10.3px;font-family:'Liberation Sans',sans-serif;color:#5a2fa4;letter-spacing:0.335px;">membership.</span>
</div></div>
<div class="abs" style="left:0;top:985px;width:1010px;height:37px;background:linear-gradient(to bottom,rgba(0,0,0,0),rgba(0,0,0,.075));-webkit-mask-image:linear-gradient(to right,#000 92%,transparent);pointer-events:none"></div><div class="abs" style="left:1692px;top:1012px;width:10px;height:10px;background:radial-gradient(circle at -1px -1px,rgba(50,45,40,0) 10.800px,#3b362f 12px)"></div><div class="abs" style="left:0;top:1019px;width:980px;height:3px;background:linear-gradient(#4c4c4c,#303030 3px);border-top-right-radius:9px 3px"></div>
</body></html>
